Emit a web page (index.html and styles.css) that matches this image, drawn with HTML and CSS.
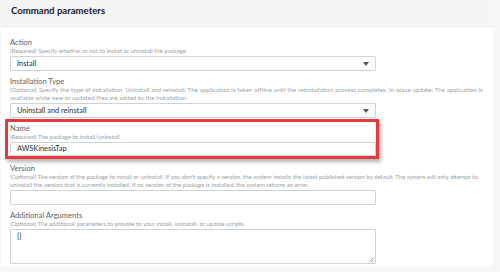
FILE: index.html
```html
<!DOCTYPE html>
<html>
<head>
    <link rel="stylesheet" href="styles.css">
</head>
<body>
<div class="panel">
    <div class="panel-header">Command parameters</div>
    <div class="panel-body">
        <div class="field">
            <div class="label">Action</div>
            <div class="desc">(Required) Specify whether or not to install or uninstall the package.</div>
            <div class="select">Install<span class="arrow"></span></div>
        </div>
        <div class="field">
            <div class="label">Installation Type</div>
            <div class="desc wide">(Optional) Specify the type of installation. Uninstall and reinstall: The application is taken offline until the reinstallation process completes. In-place update: The application is<br>available while new or updated files are added to the installation.</div>
            <div class="select">Uninstall and reinstall<span class="arrow"></span></div>
        </div>
        <div class="field marked">
            <div class="label">Name</div>
            <div class="desc">(Required) The package to install/uninstall.</div>
            <div class="input short">AWSKinesisTap</div>
        </div>
        <div class="field">
            <div class="label">Version</div>
            <div class="desc">(Optional) The version of the package to install or uninstall. If you don't specify a version, the system installs the latest published version by default. The system will only attempt to<br>uninstall the version that is currently installed. If no version of the package is installed, the system returns an error.</div>
            <div class="input"></div>
        </div>
        <div class="field">
            <div class="label">Additional Arguments</div>
            <div class="desc">(Optional) The additional parameters to provide to your install, uninstall, or update scripts.</div>
            <div class="textarea">{}<span class="grip"></span></div>
        </div>
    </div>
</div>
</body>
</html>
```

FILE: styles.css
```css
*{
    box-sizing:border-box;
    font-family:Lato, 'Open Sans', sans-serif;
}
body{
    margin:0;
    background:#f6f6f6;
    width:500px;
    height:272px;
    overflow:hidden;
}
.panel{
    width:492px;
    height:266px;
    margin-left:1px;
    background:#fff;
}
.panel-header{
    height:27px;
    background:#f5f5f5;
    border-bottom:1px solid #ececec;
    padding:5px 0 0 10px;
    font-size:9.6px;
    font-weight:bold;
    color:#16191f;
}
.panel-body{
    padding:10px 0 0 9px;
}
.field{
    width:366px;
    margin-bottom:5px;
}
.field.marked{
    position:relative;
    margin-bottom:7px;
}
.field.marked::after{
    content:"";
    position:absolute;
    left:-5px;
    top:-4px;
    right:-3px;
    bottom:-3px;
    border:3px solid #e8383d;
    box-shadow:2px 3px 4px rgba(0,0,0,0.3);
}
.label{
    height:10px;
    line-height:10px;
    font-size:7.6px;
    color:#5a6169;
}
.desc{
    width:490px;
    line-height:8px;
    font-size:6px;
    color:#97a2a3;
    white-space:nowrap;
    margin-bottom:1px;
}
.desc.wide{
    letter-spacing:0.12px;
}
.select, .input, .textarea{
    position:relative;
    height:15px;
    border:1px solid #cdd4d4;
    border-radius:1px;
    padding-left:6px;
    font-size:7.4px;
    line-height:13px;
    color:#2a2e33;
}
.input.short{
    height:14px;
    line-height:12px;
}
.arrow{
    position:absolute;
    right:6px;
    top:5px;
    border-left:3px solid transparent;
    border-right:3px solid transparent;
    border-top:4px solid #555;
}
.textarea{
    height:35px;
    line-height:14px;
}
.grip{
    position:absolute;
    right:1px;
    bottom:1px;
    width:5px;
    height:5px;
    background:linear-gradient(135deg, transparent 45%, #aaa 45%, #aaa 55%, transparent 55%, transparent 70%, #aaa 70%, #aaa 80%, transparent 80%);
}
```
